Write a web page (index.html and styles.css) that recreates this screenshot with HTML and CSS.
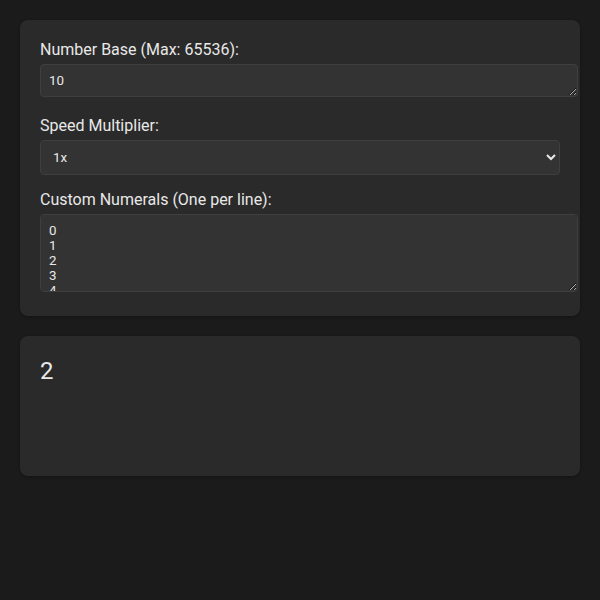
FILE: index.html
```html
<!DOCTYPE html>
<html lang="en">
<head>
<meta charset="utf-8">
<title>Counter</title>
<link rel="stylesheet" href="styles.css">
</head>
<body>
<div class="card settings">
  <div class="form-group">
    <label for="base">Number Base (Max: 65536):</label>
    <textarea id="base" class="field" rows="1">10</textarea>
  </div>
  <div class="form-group">
    <label for="speed">Speed Multiplier:</label>
    <select id="speed" class="field select">
      <option>1x</option>
      <option>2x</option>
      <option>5x</option>
      <option>10x</option>
    </select>
  </div>
  <div class="form-group">
    <label for="numerals">Custom Numerals (One per line):</label>
    <textarea id="numerals" class="field" rows="4">0
1
2
3
4
5
6
7
8
9</textarea>
  </div>
</div>
<div class="card display">
  <div class="value">2</div>
</div>
</body>
</html>
```

FILE: styles.css
```css
html {
  color-scheme: dark;
}
body {
  margin: 0;
  padding: 20px;
  background: #1b1b1b;
  color: #e8e8e8;
  font-family: Roboto, "Liberation Sans", sans-serif;
  font-size: 16px;
  display: flex;
  flex-direction: column;
  gap: 20px;
}
.card {
  background: #2a2a2a;
  border-radius: 8px;
  padding: 20px;
  box-shadow: 0 1px 3px rgba(0, 0, 0, 0.3);
}
.form-group {
  margin-bottom: 15px;
}
.form-group:last-child {
  margin-bottom: 0;
}
label {
  display: block;
  margin-bottom: 5px;
}
.field {
  width: 100%;
  padding: 8px;
  border: 1px solid #3f3f3f;
  border-radius: 4px;
  background: #333333;
  color: #e8e8e8;
  font-family: Roboto, "Liberation Sans", sans-serif;
  font-size: 13.333px;
}
textarea.field {
  box-sizing: content-box;
}
.select {
  box-sizing: border-box;
  height: 35px;
}
.display {
  min-height: 100px;
}
.value {
  font-size: 24px;
  line-height: 30px;
  margin-top: 0;
}
```
